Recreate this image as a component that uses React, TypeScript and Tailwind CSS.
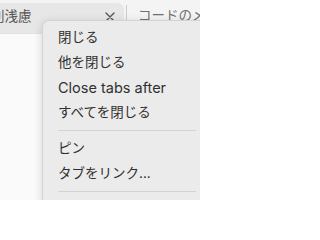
import React from "react";

function Row({ children, latin }: { children: React.ReactNode; latin?: boolean }) {
  return (
    <div
      className={
        latin
          ? "flex h-[25px] items-center pl-[15px] text-[14.5px] text-[#303030]"
          : "flex h-[25px] items-center pl-[15px] text-[13.5px] text-[#303030]"
      }
    >
      {children}
    </div>
  );
}

function Sep() {
  return (
    <div className="flex h-[11px] items-center px-[15px]">
      <div className="h-px w-full bg-[#d3d3d3]" />
    </div>
  );
}

export default function App() {
  return (
    <div className="relative h-[200px] w-[200px] overflow-hidden bg-[#fafafa] font-['Inter','Noto_Sans_CJK_JP',sans-serif]">
      <div className="flex h-[34px] overflow-hidden border-b border-[#e2e2e2] bg-[#f4f4f4]">
        <div className="mt-[3px] flex w-[124px] shrink-0 items-start rounded-tr-[7px] bg-[#e7e7e7] pr-[9px] pt-[3px]">
          <span className="ml-[-9px] whitespace-nowrap text-[13.5px] text-[#555]">則浅慮</span>
          <svg className="ml-auto mt-[6px] shrink-0" width="10" height="10" viewBox="0 0 10 10">
            <path d="M1 1 L9 9 M9 1 L1 9" stroke="#555" strokeWidth="1.4" strokeLinecap="round" />
          </svg>
        </div>
        <div className="ml-[2px] mt-[5px] mb-[3px] w-px shrink-0 bg-[#cdcdcd]" />
        <span className="ml-[11px] mt-[5px] whitespace-nowrap text-[13.5px] text-[#707070]">コードのメモ</span>
      </div>
      <div className="absolute left-[42px] top-[20px] h-[200px] w-[170px] rounded-[7px] border border-[#d4d4d4] bg-[#ebebeb] pt-[4px] shadow-[0_2px_10px_rgba(0,0,0,0.15)]">
        <Row>閉じる</Row>
        <Row>他を閉じる</Row>
        <Row latin>Close tabs after</Row>
        <Row>すべてを閉じる</Row>
        <Sep />
        <Row>ピン</Row>
        <Row>タブをリンク...</Row>
        <Sep />
      </div>
    </div>
  );
}
